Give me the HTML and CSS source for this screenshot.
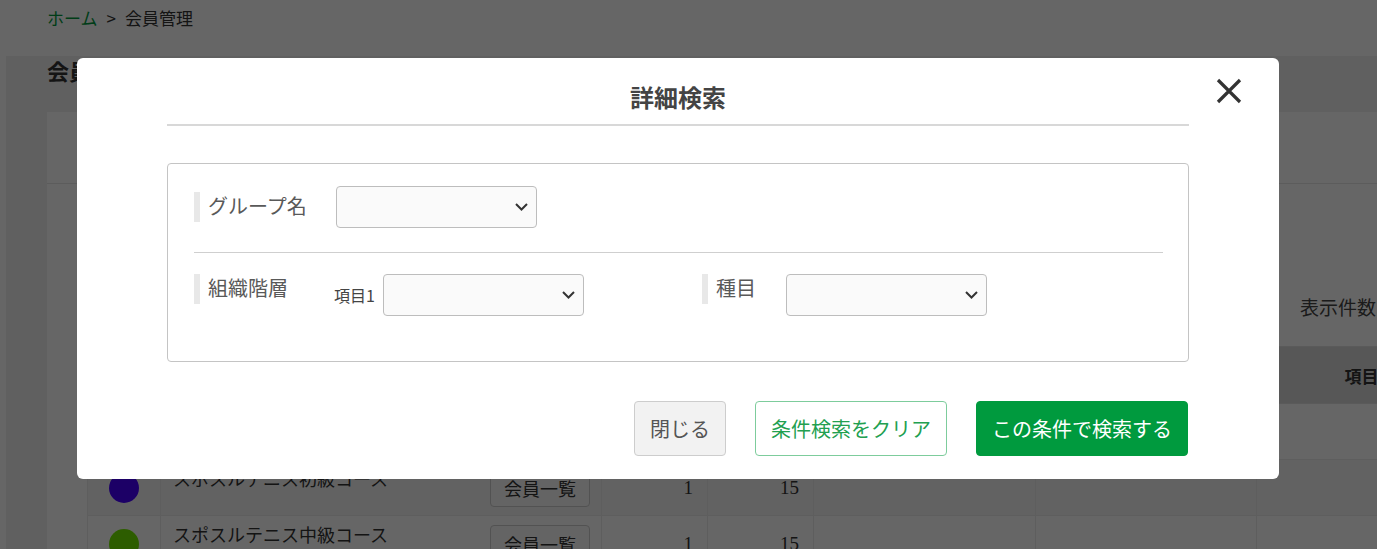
FILE: index.html
```html
<!DOCTYPE html>
<html lang="ja">
<head>
    <meta charset="UTF-8">
    <meta name="viewport" content="width=device-width, initial-scale=1.0">
    <title>会員管理</title>
    <link rel="stylesheet" href="styles.css">
</head>
<body>
    <nav class="breadcrumb">
        <a href="#">ホーム</a>
        <span class="sep">&gt;</span>
        <span>会員管理</span>
    </nav>

    <div class="content">
        <h1 class="page-title">会員管理</h1>
        <div class="card">
            <div class="card-head"></div>
            <div class="card-body">
                <div class="toolbar">
                    <span>表示件数</span>
                </div>
                <table class="group-table">
                    <colgroup>
                        <col style="width: 73px">
                        <col style="width: 441px">
                        <col style="width: 106px">
                        <col style="width: 106px">
                        <col style="width: 222px">
                        <col style="width: 221px">
                        <col style="width: 220px">
                    </colgroup>
                    <thead>
                        <tr>
                            <th></th>
                            <th>グループ名</th>
                            <th>階層</th>
                            <th>人数</th>
                            <th></th>
                            <th></th>
                            <th>項目1</th>
                        </tr>
                    </thead>
                    <tbody>
                        <tr>
                            <td><span class="dot" style="background: #ff5a00"></span></td>
                            <td class="name-cell"><span class="name">スポスルテニス入門コース</span><button class="btn-small">会員一覧</button></td>
                            <td class="num">1</td>
                            <td class="num">15</td>
                            <td></td>
                            <td></td>
                            <td></td>
                        </tr>
                        <tr>
                            <td><span class="dot" style="background: #4600ff"></span></td>
                            <td class="name-cell"><span class="name">スポスルテニス初級コース</span><button class="btn-small">会員一覧</button></td>
                            <td class="num">1</td>
                            <td class="num">15</td>
                            <td></td>
                            <td></td>
                            <td></td>
                        </tr>
                        <tr>
                            <td><span class="dot" style="background: #72e900"></span></td>
                            <td class="name-cell"><span class="name">スポスルテニス中級コース</span><button class="btn-small">会員一覧</button></td>
                            <td class="num">1</td>
                            <td class="num">15</td>
                            <td></td>
                            <td></td>
                            <td></td>
                        </tr>
                    </tbody>
                </table>
            </div>
        </div>
    </div>

    <div class="overlay"></div>

    <div class="modal">
        <div class="modal-header">
            <h2>詳細検索</h2>
            <button class="modal-close" aria-label="閉じる">
                <svg width="26" height="26" viewBox="0 0 26 26">
                    <path d="M2 2 L24 24 M24 2 L2 24" stroke="#333" stroke-width="3.2" fill="none"/>
                </svg>
            </button>
        </div>

        <div class="search-box">
            <div class="search-row">
                <div class="field-label">グループ名</div>
                <div class="select">
                    <svg width="13" height="8" viewBox="0 0 13 8"><polyline points="1,1 6.5,6.5 12,1" fill="none" stroke="#333" stroke-width="2"/></svg>
                </div>
            </div>
            <div class="search-row second">
                <div class="field-group org">
                    <div class="field-label">組織階層</div>
                    <span class="sub-label">項目1</span>
                    <div class="select">
                        <svg width="13" height="8" viewBox="0 0 13 8"><polyline points="1,1 6.5,6.5 12,1" fill="none" stroke="#333" stroke-width="2"/></svg>
                    </div>
                </div>
                <div class="field-group">
                    <div class="field-label short">種目</div>
                    <div class="select">
                        <svg width="13" height="8" viewBox="0 0 13 8"><polyline points="1,1 6.5,6.5 12,1" fill="none" stroke="#333" stroke-width="2"/></svg>
                    </div>
                </div>
            </div>
        </div>

        <div class="modal-actions">
            <button class="btn btn-close">閉じる</button>
            <button class="btn btn-clear">条件検索をクリア</button>
            <button class="btn btn-search">この条件で検索する</button>
        </div>
    </div>
</body>
</html>
```

FILE: styles.css
```css
* {
    margin: 0;
    padding: 0;
    box-sizing: border-box;
}

body {
    font-family: "Noto Sans CJK JP", "Noto Sans", sans-serif;
    color: #333;
    background: white;
    overflow: hidden;
    height: 549px;
}

button {
    font-family: inherit;
    cursor: pointer;
}

/* background page */

.breadcrumb {
    padding: 6px 47px 26px;
    font-size: 17px;
    line-height: 24px;
    display: flex;
    gap: 9px;
}

.breadcrumb a {
    color: #009a3e;
    text-decoration: none;
}

.content {
    background: #f0f0f0;
    margin-left: 6px;
    width: 1500px;
    height: 600px;
}

.page-title {
    padding-left: 41px;
    font-size: 22px;
    line-height: 28px;
    font-weight: bold;
    color: #333;
}

.card {
    margin: 28px 0 0 41px;
    background: white;
    height: 600px;
}

.card-head {
    height: 72px;
    border-bottom: 1px solid #e6e6e6;
}

.card-body {
    padding: 0 40px;
}

.toolbar {
    padding: 110px 0 26px 1213px;
    font-size: 19px;
    line-height: 26px;
    color: #444;
    white-space: nowrap;
}

.group-table {
    border-collapse: collapse;
    table-layout: fixed;
    width: 1389px;
}

.group-table th {
    height: 57px;
    background: #dadada;
    font-size: 17px;
    font-weight: bold;
    color: #333;
    border: 1px solid #e2e2e2;
}

.group-table td {
    height: 56px;
    border: 1px solid #ebebeb;
    text-align: center;
    font-size: 18px;
}

.group-table tbody tr:nth-child(even) td {
    background: #f6f6f6;
}

.dot {
    display: inline-block;
    width: 30px;
    height: 30px;
    border-radius: 50%;
    vertical-align: middle;
}

.group-table td.name-cell {
    text-align: left;
    padding: 0 11px 0 12px;
}

.name-cell .name {
    display: inline-block;
    line-height: 22px;
    vertical-align: top;
    margin-top: -2px;
}

.btn-small {
    float: right;
    width: 100px;
    height: 38px;
    border: 1px solid #ccc;
    border-radius: 4px;
    background: #fafafa;
    font-size: 18px;
    color: #333;
}

.group-table td.num {
    text-align: right;
    padding-right: 14px;
    font-family: "Liberation Serif", serif;
    font-size: 19px;
}

/* modal */

.overlay {
    position: fixed;
    inset: 0;
    background: rgba(0, 0, 0, 0.6);
}

.modal {
    position: fixed;
    top: 58px;
    left: 77px;
    width: 1202px;
    background: white;
    border-radius: 6px;
    padding: 0 90px 23px;
}

.modal-header {
    padding: 26px 0 14px;
    border-bottom: 2px solid #d8d8d8;
    text-align: center;
}

.modal-header h2 {
    font-size: 24px;
    line-height: 26px;
    font-weight: bold;
    color: #444;
}

.modal-close {
    position: absolute;
    right: 37px;
    top: 20px;
    width: 26px;
    height: 26px;
    border: none;
    background: none;
}

.modal-close svg {
    display: block;
}

.search-box {
    margin-top: 37px;
    border: 1px solid #c4c4c4;
    border-radius: 4px;
    padding: 22px 25px 45px 26px;
}

.search-row {
    display: flex;
    align-items: center;
    padding-bottom: 24px;
    border-bottom: 1px solid #cfcfcf;
}

.search-row.second {
    align-items: flex-start;
    padding-bottom: 0;
    border-bottom: none;
    margin-top: 21px;
}

.field-group {
    display: flex;
    align-items: flex-start;
}

.field-group.org {
    width: 508px;
}

.field-label {
    width: 142px;
    height: 30px;
    line-height: 28px;
    border-left: 6px solid #e8e8e8;
    padding-left: 8px;
    font-size: 20px;
    color: #595959;
    white-space: nowrap;
}

.field-group .field-label {
    width: 140px;
}

.field-group .field-label.short {
    width: 84px;
}

.sub-label {
    font-size: 16px;
    line-height: 42px;
    color: #444;
    margin-right: 8px;
}

.select {
    width: 201px;
    height: 42px;
    border: 1px solid #bdbdbd;
    border-radius: 4px;
    background: #fafafa;
    display: flex;
    align-items: center;
    justify-content: flex-end;
    padding-right: 8px;
}

.modal-actions {
    margin-top: 39px;
    display: flex;
    justify-content: flex-end;
    gap: 29px;
    padding-right: 1px;
}

.btn {
    height: 55px;
    padding: 0 15px;
    border-radius: 4px;
    font-size: 20px;
    line-height: 1;
}

.btn-close {
    background: #f2f2f2;
    border: 1px solid #cdcdcd;
    color: #555;
}

.btn-clear {
    background: white;
    border: 1px solid #7dcc9c;
    color: #22a050;
}

.btn-search {
    background: #009a3e;
    border: 1px solid #009a3e;
    color: white;
}
```
